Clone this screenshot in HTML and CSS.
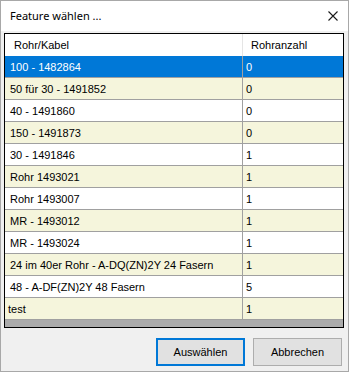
FILE: index.html
```html
<!DOCTYPE html>
<html lang="de">
<head>
    <meta charset="UTF-8">
    <title>Feature wählen ...</title>
    <link rel="stylesheet" href="styles.css">
</head>
<body>

<div class="window">
    <div class="titlebar">
        <span class="title">Feature wählen ...</span>
        <svg class="close" width="10" height="10" viewBox="0 0 10 10">
            <path d="M0.5 0.5 L9.5 9.5 M9.5 0.5 L0.5 9.5" stroke="#1a1a1a" stroke-width="1.1" fill="none"/>
        </svg>
    </div>

    <div class="content">
        <div class="grid">
            <div class="row header">
                <div class="cell first">Rohr/Kabel</div>
                <div class="cell second">Rohranzahl</div>
            </div>
            <div class="row selected">
                <div class="cell first">100 - 1482864</div>
                <div class="cell second">0</div>
            </div>
            <div class="row alt">
                <div class="cell first">50 für 30 - 1491852</div>
                <div class="cell second">0</div>
            </div>
            <div class="row">
                <div class="cell first">40 - 1491860</div>
                <div class="cell second">0</div>
            </div>
            <div class="row alt">
                <div class="cell first">150 - 1491873</div>
                <div class="cell second">0</div>
            </div>
            <div class="row">
                <div class="cell first">30 - 1491846</div>
                <div class="cell second">1</div>
            </div>
            <div class="row alt">
                <div class="cell first">Rohr 1493021</div>
                <div class="cell second">1</div>
            </div>
            <div class="row">
                <div class="cell first">Rohr 1493007</div>
                <div class="cell second">1</div>
            </div>
            <div class="row alt">
                <div class="cell first">MR - 1493012</div>
                <div class="cell second">1</div>
            </div>
            <div class="row">
                <div class="cell first">MR - 1493024</div>
                <div class="cell second">1</div>
            </div>
            <div class="row alt">
                <div class="cell first">24 im 40er Rohr - A-DQ(ZN)2Y 24 Fasern</div>
                <div class="cell second">1</div>
            </div>
            <div class="row">
                <div class="cell first">48 - A-DF(ZN)2Y 48 Fasern</div>
                <div class="cell second">5</div>
            </div>
            <div class="row alt">
                <div class="cell first tight">test</div>
                <div class="cell second">1</div>
            </div>
        </div>

        <div class="buttons">
            <button class="btn default">Auswählen</button>
            <button class="btn">Abbrechen</button>
        </div>
    </div>
</div>

</body>
</html>
```

FILE: styles.css
```css
* {
    margin: 0;
    padding: 0;
    box-sizing: border-box;
}

body {
    font-family: 'Liberation Sans', Arial, sans-serif;
    font-size: 11px;
    color: #000;
    width: 349px;
    height: 372px;
    background: #f0f0f0;
}

.window {
    width: 349px;
    height: 372px;
    border: 1px solid #a8a8a8;
    background: #f0f0f0;
    display: flex;
    flex-direction: column;
}

.titlebar {
    height: 30px;
    background: #fff;
    display: flex;
    align-items: center;
    justify-content: space-between;
    padding: 0 10px 1px 9px;
}

.title {
    font-family: 'Noto Sans', 'Open Sans', sans-serif;
    font-size: 11px;
    color: #000;
}

.close {
    display: block;
    margin-top: 1px;
}

.content {
    padding: 2px 4px 0 3px;
}

.grid {
    width: 340px;
    height: 295px;
    border: 1px solid #000;
    background: #ababab;
}

.row {
    display: flex;
    height: 22px;
    background: #fff;
    border-bottom: 1px solid #a0a0a0;
}

.row.alt {
    background: #f5f5dc;
}

.row.selected {
    background: #0078d7;
    color: #fff;
}

.row.header {
    border-bottom: none;
}

.cell {
    display: flex;
    align-items: center;
    white-space: nowrap;
    overflow: hidden;
}

.cell.first {
    width: 238px;
    padding-left: 5px;
    border-right: 1px solid #a0a0a0;
}

.cell.tight {
    padding-left: 3px;
}

.cell.second {
    width: 100px;
    padding-left: 3px;
}

.header .cell.first {
    padding-left: 9px;
    border-right: 1px solid #e5e5e5;
}

.header .cell.second {
    padding-left: 8px;
}

.buttons {
    display: flex;
    justify-content: flex-end;
    gap: 8px;
    margin-top: 10px;
    padding-right: 2px;
}

.btn {
    width: 89px;
    height: 28px;
    font-family: 'Liberation Sans', Arial, sans-serif;
    font-size: 11px;
    color: #000;
    background: #e1e1e1;
    border: 1px solid #adadad;
}

.btn.default {
    border: 2px solid #0078d7;
}
```
